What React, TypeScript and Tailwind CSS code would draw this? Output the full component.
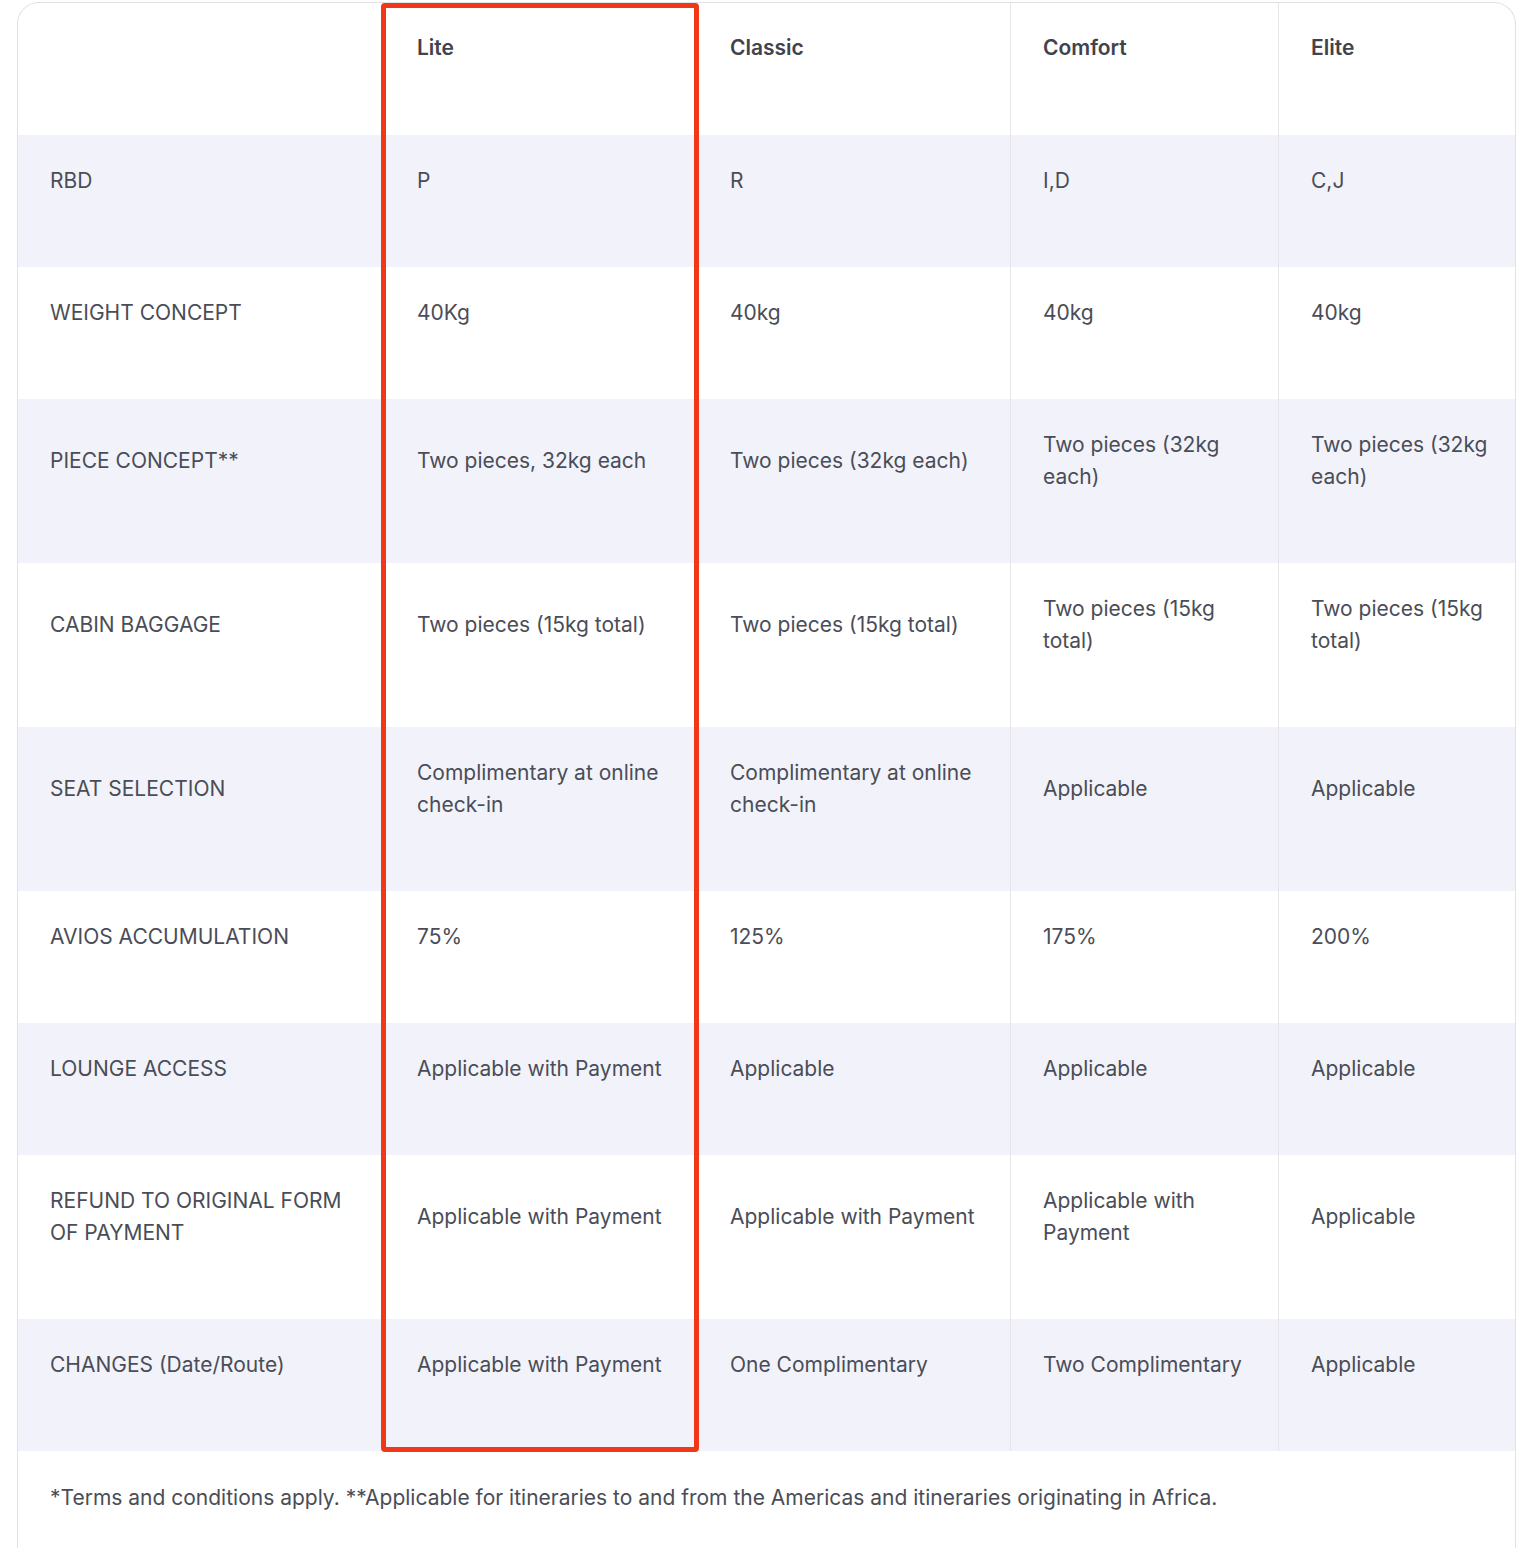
const tiers = ["Lite", "Classic", "Comfort", "Elite"];

const rows: { label: string; values: string[] }[] = [
  { label: "RBD", values: ["P", "R", "I,D", "C,J"] },
  { label: "WEIGHT CONCEPT", values: ["40Kg", "40kg", "40kg", "40kg"] },
  {
    label: "PIECE CONCEPT**",
    values: ["Two pieces, 32kg each", "Two pieces (32kg each)", "Two pieces (32kg each)", "Two pieces (32kg each)"],
  },
  {
    label: "CABIN BAGGAGE",
    values: ["Two pieces (15kg total)", "Two pieces (15kg total)", "Two pieces (15kg total)", "Two pieces (15kg total)"],
  },
  {
    label: "SEAT SELECTION",
    values: ["Complimentary at online check-in", "Complimentary at online check-in", "Applicable", "Applicable"],
  },
  { label: "AVIOS ACCUMULATION", values: ["75%", "125%", "175%", "200%"] },
  { label: "LOUNGE ACCESS", values: ["Applicable with Payment", "Applicable", "Applicable", "Applicable"] },
  {
    label: "REFUND TO ORIGINAL FORM OF PAYMENT",
    values: ["Applicable with Payment", "Applicable with Payment", "Applicable with Payment", "Applicable"],
  },
  {
    label: "CHANGES (Date/Route)",
    values: ["Applicable with Payment", "One Complimentary", "Two Complimentary", "Applicable"],
  },
];

const gridCols = "grid grid-cols-[364px_315px_313px_268px_237px]";

function Cell({
  children,
  first,
  head,
  lite,
}: {
  children: React.ReactNode;
  first?: boolean;
  head?: boolean;
  lite?: boolean;
}) {
  return (
    <div
      className={`flex flex-col justify-center pr-6 ${lite ? "pl-[34px]" : "pl-8"} ${
        head ? "pt-[29px] pb-[71px]" : "pt-[30px] pb-[70px]"
      } ${first ? "" : "border-l border-[#e6e6ea]"}`}
    >
      {children}
    </div>
  );
}

export default function App() {
  return (
    <div className="min-h-screen bg-white pt-[2px] pl-[17px] font-['Inter','Noto_Sans',sans-serif] text-[21px] leading-[32px] text-[#4a4d57]">
      <div className="w-[1499px] overflow-hidden rounded-t-[22px] border border-b-0 border-[#e2e2e6] bg-white">
        <div className="relative">
          {/* header */}
          <div className={gridCols}>
            <Cell first head>
              <span />
            </Cell>
            {tiers.map((t, j) => (
              <Cell key={t} head lite={j === 0}>
                <span className="font-semibold text-[#40434c]">{t}</span>
              </Cell>
            ))}
          </div>

          {rows.map((r, i) => (
            <div key={r.label} className={`${gridCols} ${i % 2 === 0 ? "bg-[#f2f3fa]" : "bg-white"}`}>
              <Cell first>{r.label}</Cell>
              {r.values.map((v, j) => (
                <Cell key={j} lite={j === 0}>
                  {v}
                </Cell>
              ))}
            </div>
          ))}

          {/* highlight around the Lite column */}
          <div className="pointer-events-none absolute top-0 -bottom-[1px] left-[363px] w-[318px] rounded-[4px] border-[5px] border-[#f03818]" />
        </div>

        <div className="px-8 pt-[31px] pb-[80px]">
          *Terms and conditions apply. **Applicable for itineraries to and from the Americas and itineraries originating
          in Africa.
        </div>
      </div>
    </div>
  );
}
